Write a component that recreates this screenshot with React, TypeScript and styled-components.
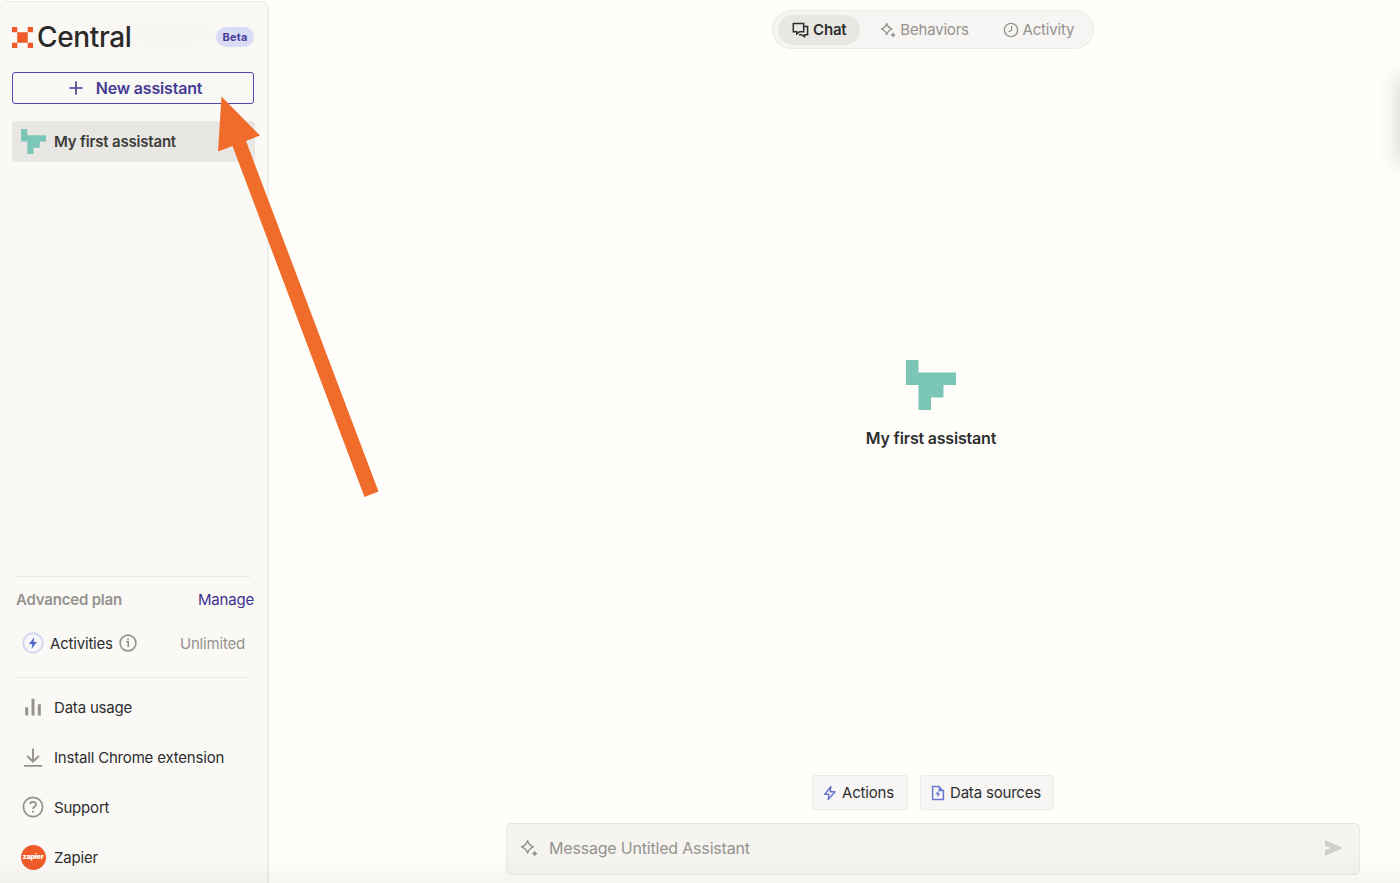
import React from 'react'
import styled, { createGlobalStyle } from 'styled-components'

const GlobalStyle = createGlobalStyle`
    * {
        box-sizing: border-box;
    }
    body {
        margin: 0;
        background: #fffefb;
        font-family: Inter, "Liberation Sans", sans-serif;
        letter-spacing: -0.19px;
        color: #2d2e2e;
        overflow: hidden;
    }
    button {
        font-family: inherit;
        letter-spacing: inherit;
        cursor: pointer;
    }
    svg {
        display: block;
        flex-shrink: 0;
    }
`

const Page = styled.div`
    display: flex;
    width: 100%;
    height: 100vh;
    position: relative;
    overflow: hidden;
`

/* soft fade over the bottom edge of the window */
const BottomFade = styled.div`
    position: absolute;
    left: 0;
    right: 0;
    bottom: 0;
    height: 26px;
    background: linear-gradient(to bottom, rgba(90, 90, 85, 0), rgba(90, 90, 85, 0.06));
    pointer-events: none;
`
const EdgeShadow = styled.div`
    position: absolute;
    right: -10px;
    top: 78px;
    width: 10px;
    height: 86px;
    box-shadow: 0 0 20px 1px rgba(60, 60, 55, 0.28);
    pointer-events: none;
`
const ArrowOverlay = styled.svg`
    position: absolute;
    left: 0;
    top: 0;
    pointer-events: none;
`

const Sidebar = styled.aside`
    display: flex;
    flex-direction: column;
    width: 269px;
    margin-top: 1px;
    padding: 21px 14px 0 12px;
    background: radial-gradient(ellipse 110px 30px at 170px 32px, #f6f5f2, #faf9f6) #faf9f6;
    border-top: 1px solid #eeede9;
    border-right: 2px solid #f0eeeb;
    border-radius: 6px 8px 0 0;
`
const SidebarHeader = styled.header`
    display: flex;
    align-items: center;
    height: 28px;
    margin-bottom: 21px;
`
const Wordmark = styled.span`
    flex: 1;
    margin-left: 4px;
    font-size: 28px;
    font-weight: 500;
    line-height: 28px;
    letter-spacing: -0.35px;
    color: #2b2a28;
`
const Badge = styled.span`
    width: 38px;
    height: 20px;
    margin-right: -1px;
    border-radius: 10px;
    background: #d8dcf6;
    color: #4a3f99;
    font-size: 11px;
    font-weight: 700;
    line-height: 20px;
    letter-spacing: 0.2px;
    text-align: center;
`
const NewButton = styled.button`
    display: flex;
    align-items: center;
    justify-content: center;
    gap: 13px;
    width: 242px;
    height: 32px;
    padding: 0 0 0 5px;
    border: 1.5px solid #5546b0;
    border-radius: 3px;
    background: #f8f8f5;
    color: #453b94;
    font-size: 16px;
    font-weight: 600;
`
const AssistantRow = styled.div`
    display: flex;
    align-items: center;
    gap: 8px;
    width: 243px;
    height: 41px;
    margin-top: 17px;
    padding-left: 9px;
    border-radius: 4px;
    background: #e8e7e4;
    font-size: 15px;
    font-weight: 600;
    color: #3c3b39;
`
const Spacer = styled.div`
    flex: 1;
`
const Divider = styled.hr`
    width: 234px;
    height: 1px;
    margin: 0 0 0 4px;
    border: 0;
    background: #e9e8e4;
`
const PlanRow = styled.div`
    display: flex;
    align-items: center;
    justify-content: space-between;
    width: 242px;
    height: 45px;
    padding-left: 4px;
    font-size: 15px;
    font-weight: 600;
    color: #95928e;
`
const ManageLink = styled.a`
    font-weight: 400;
    color: #3d3190;
`
const UsageRow = styled.div`
    display: flex;
    align-items: center;
    height: 42px;
    margin-bottom: 13px;
    padding: 0 9px 0 10px;
    font-size: 15px;
`
const UsageLabel = styled.span`
    margin: 0 6px;
`
const UsageValue = styled.span`
    margin-left: auto;
    margin-right: -1px;
    color: #95928e;
`
const MenuList = styled.nav`
    display: flex;
    flex-direction: column;
    padding-top: 4px;
    padding-bottom: 1px;
`
const MenuItem = styled.a`
    display: flex;
    align-items: center;
    gap: 8px;
    height: 50px;
    padding-left: 8px;
    font-size: 15px;
    color: #2d2e2e;
`
const MenuIcon = styled.span`
    display: flex;
    align-items: center;
    justify-content: center;
    width: 26px;
    height: 26px;
    color: #95928e;
`
const Avatar = styled.span`
    display: flex;
    align-items: center;
    justify-content: center;
    width: 25px;
    height: 25px;
    border-radius: 50%;
    background: #f05a28;
    color: #fff;
    font-size: 7px;
    font-weight: 900;
    letter-spacing: -0.2px;
    line-height: 7px;
    padding-bottom: 1px;
`

const Main = styled.main`
    display: flex;
    flex: 1;
    flex-direction: column;
    align-items: center;
    padding: 10px 40px 8px 237px;
`
const Tabs = styled.div`
    display: flex;
    align-items: center;
    width: 322px;
    height: 39px;
    padding: 0 5px;
    border: 1px solid #eceae7;
    border-radius: 20px;
    background: #f6f5f3;
`
const Tab = styled.button<{ $active?: boolean; $width: number }>`
    display: flex;
    align-items: center;
    justify-content: center;
    gap: 4px;
    width: ${({ $width }) => $width}px;
    height: 30px;
    padding: 0 0 0 ${({ $active }) => ($active ? 0 : 3)}px;
    border: 0;
    border-radius: 15px;
    background: ${({ $active }) => ($active ? '#e8e7e4' : 'transparent')};
    color: ${({ $active }) => ($active ? '#2d2e2e' : '#95928e')};
    font-size: 15px;
    font-weight: ${({ $active }) => ($active ? 600 : 400)};
`
const Welcome = styled.section`
    display: flex;
    flex: 1;
    flex-direction: column;
    align-items: center;
    gap: 18px;
    margin-right: 4px;
    padding-top: 310.5px;
`
const WelcomeTitle = styled.h1`
    margin: 0;
    font-size: 16px;
    font-weight: 600;
    line-height: 20px;
`
const Chips = styled.div`
    display: flex;
    gap: 12px;
`
const Chip = styled.button<{ $width: number }>`
    display: flex;
    align-items: center;
    gap: 5px;
    width: ${({ $width }) => $width}px;
    height: 35px;
    padding: 0 0 0 10px;
    border: 1px solid #ebeae7;
    border-radius: 3px;
    background: #f7f6f4;
    color: #2d2e2e;
    font-size: 15px;
`
const MessageBox = styled.div`
    display: flex;
    align-items: center;
    gap: 11px;
    width: 854px;
    height: 52px;
    margin-top: 13px;
    padding: 0 16px 2px 13px;
    border: 1px solid #e8e7e4;
    border-radius: 5px;
    background: #f5f4f1;
    color: #95928e;
    font-size: 16px;
`
const Placeholder = styled.span`
    flex: 1;
`

const BirdMark: React.FC<{ size: number }> = ({ size }) => (
    <svg width={size} height={size} viewBox="0 0 4 4">
        <path d="M0 0h1v1h3v1h-1v1h-1v1h-1v-2h-1z" fill="#7bc6b7" />
    </svg>
)

const LogoMark = () => (
    <svg width="21" height="21" viewBox="0 0 4 4">
        <path d="M0 0h1v1h2v-1h1v1h-1v2h1v1h-1v-1h-2v1h-1v-1h1v-2h-1z" fill="#f05a28" />
    </svg>
)

const PlusIcon = () => (
    <svg width="14" height="14" viewBox="0 0 14 14" fill="none" stroke="currentColor" strokeWidth="1.6">
        <path d="M7 0.3v13.4M0.3 7h13.4" />
    </svg>
)

const ChatIcon = () => (
    <svg width="17" height="16" viewBox="0 0 17 16" fill="none" stroke="currentColor" strokeWidth="1.5">
        <path d="M1.3 1.5h10.4v8.2H7.6L4.8 12V9.7H1.3z" />
        <path d="M11.8 4.6h3.8v8.1h-3v1.9l-3.4-1.9H7" />
    </svg>
)

const SparkleIcon: React.FC<{ size?: number }> = ({ size = 16 }) => (
    <svg width={size} height={size} viewBox="0 0 18 18" fill="none" stroke="currentColor" strokeWidth="1.5">
        <path d="M7.6 1.7C8.6 5.2 9.9 6.6 13.4 7.9C9.9 9.2 8.6 10.6 7.6 14.1C6.6 10.6 5.3 9.2 1.5 7.9C5.3 6.6 6.6 5.2 7.6 1.7z" strokeLinejoin="round" />
        <path d="M14.7 11.6l1.1 1.9 1.9 1.1-1.9 1.1-1.1 1.9-1.1-1.9-1.9-1.1 1.9-1.1z" fill="currentColor" stroke="none" />
    </svg>
)

const ClockIcon = () => (
    <svg width="16" height="16" viewBox="0 0 16 16" fill="none" stroke="currentColor" strokeWidth="1.3">
        <circle cx="8" cy="8" r="6.6" />
        <path d="M8.6 4v4.2L5.8 9.9" />
    </svg>
)

const ActivityIcon = () => (
    <svg width="22" height="22" viewBox="0 0 22 22">
        <circle cx="11" cy="11" r="9.7" fill="#f8f8fb" stroke="#d6d8f2" strokeWidth="2" />
        <path d="M12.3 5.3L6.9 12h3.3l-.6 4.800L15 10h-3.3z" fill="#5267c5" />
    </svg>
)

const InfoIcon = () => (
    <svg width="18" height="18" viewBox="0 0 18 18" fill="none" stroke="#95928e" strokeWidth="1.6">
        <circle cx="9" cy="9" r="7.9" />
        <path d="M7.2 7.8h2v5.2M9.1 4.6v1.7" />
    </svg>
)

const BarsIcon = () => (
    <svg width="18" height="18" viewBox="0 0 18 18" fill="currentColor">
        <path d="M1.2 9.2h3v8.3h-3zM7.5 0.8h3v16.7h-3zM13.8 6.2h3v11.3h-3z" />
    </svg>
)

const DownloadIcon = () => (
    <svg width="20" height="20" viewBox="0 0 20 20" fill="none" stroke="currentColor" strokeWidth="1.9">
        <path d="M10 1.500V14.500M4.200 9L10 14.700L15.800 9M0.800 18.900H19.200" />
    </svg>
)

const HelpIcon = () => (
    <svg width="22" height="22" viewBox="0 0 22 22" fill="none" stroke="currentColor" strokeWidth="1.7">
        <circle cx="11" cy="11" r="9.6" />
        <path d="M8 8.2C8.2 6.6 9.3 5.9 11 5.9C12.8 5.9 14.1 6.8 14.1 8.5C14.1 10.6 11 10.5 11 13.1M11 14.8V16.8" />
    </svg>
)

const BoltIcon = () => (
    <svg width="14" height="16" viewBox="0 0 14 16" fill="none" stroke="#6a78cf" strokeWidth="1.5" strokeLinejoin="round">
        <path d="M7.8 1.6L1.7 9.2h4.2l-.7 5.4L12 6.8H7.2z" />
    </svg>
)

const FileBoltIcon = () => (
    <svg width="14" height="16" viewBox="0 0 14 16" fill="none" stroke="#6a78cf" strokeWidth="1.5">
        <path d="M8.2 1.6H1.6v12.8h10.8V5.6H8.4V1.2" />
        <path d="M8.4 1.2l4 4.2h-4z" fill="#6a78cf" stroke="none" />
        <path d="M7.5 5.6L4.4 9.3h2.1l-.3 3L9.4 8.6H7.3z" fill="#6a78cf" stroke="none" />
    </svg>
)

const SendIcon = () => (
    <svg width="18" height="16" viewBox="0 0 18 16" fill="#cfcecb">
        <path d="M0 0L18 8L0 16V10.2L6.4 8L0 5.8z" />
    </svg>
)

const menuItems = [
    { label: 'Data usage', icon: <BarsIcon /> },
    { label: 'Install Chrome extension', icon: <DownloadIcon /> },
    { label: 'Support', icon: <HelpIcon /> },
    { label: 'Zapier', icon: <Avatar>zapier</Avatar> },
]

const App: React.FC = () => {
    return (
        <Page>
            <GlobalStyle />
            <Sidebar>
                <SidebarHeader>
                    <LogoMark />
                    <Wordmark>Central</Wordmark>
                    <Badge>Beta</Badge>
                </SidebarHeader>
                <NewButton>
                    <PlusIcon />
                    New assistant
                </NewButton>
                <AssistantRow>
                    <BirdMark size={25} />
                    My first assistant
                </AssistantRow>
                <Spacer />
                <Divider />
                <PlanRow>
                    Advanced plan
                    <ManageLink>Manage</ManageLink>
                </PlanRow>
                <UsageRow>
                    <ActivityIcon />
                    <UsageLabel>Activities</UsageLabel>
                    <InfoIcon />
                    <UsageValue>Unlimited</UsageValue>
                </UsageRow>
                <Divider />
                <MenuList>
                    {menuItems.map((item) => (
                        <MenuItem key={item.label}>
                            <MenuIcon>{item.icon}</MenuIcon>
                            {item.label}
                        </MenuItem>
                    ))}
                </MenuList>
            </Sidebar>
            <Main>
                <Tabs>
                    <Tab $active $width={83}>
                        <ChatIcon />
                        Chat
                    </Tab>
                    <Tab $width={126}>
                        <SparkleIcon />
                        Behaviors
                    </Tab>
                    <Tab $width={103}>
                        <ClockIcon />
                        Activity
                    </Tab>
                </Tabs>
                <Welcome>
                    <BirdMark size={50} />
                    <WelcomeTitle>My first assistant</WelcomeTitle>
                </Welcome>
                <Chips>
                    <Chip $width={96}>
                        <BoltIcon />
                        Actions
                    </Chip>
                    <Chip $width={134}>
                        <FileBoltIcon />
                        Data sources
                    </Chip>
                </Chips>
                <MessageBox>
                    <SparkleIcon size={18} />
                    <Placeholder>Message Untitled Assistant</Placeholder>
                    <SendIcon />
                </MessageBox>
            </Main>
            <BottomFade />
            <EdgeShadow />
            <ArrowOverlay width="400" height="510" viewBox="0 0 400 510">
                <path d="M221.5 96.5L260 135.5L246 141L378.5 491.5L364.5 497L232.5 146L218 151.5z" fill="#f06c2b" />
            </ArrowOverlay>
        </Page>
    )
}

export default App
